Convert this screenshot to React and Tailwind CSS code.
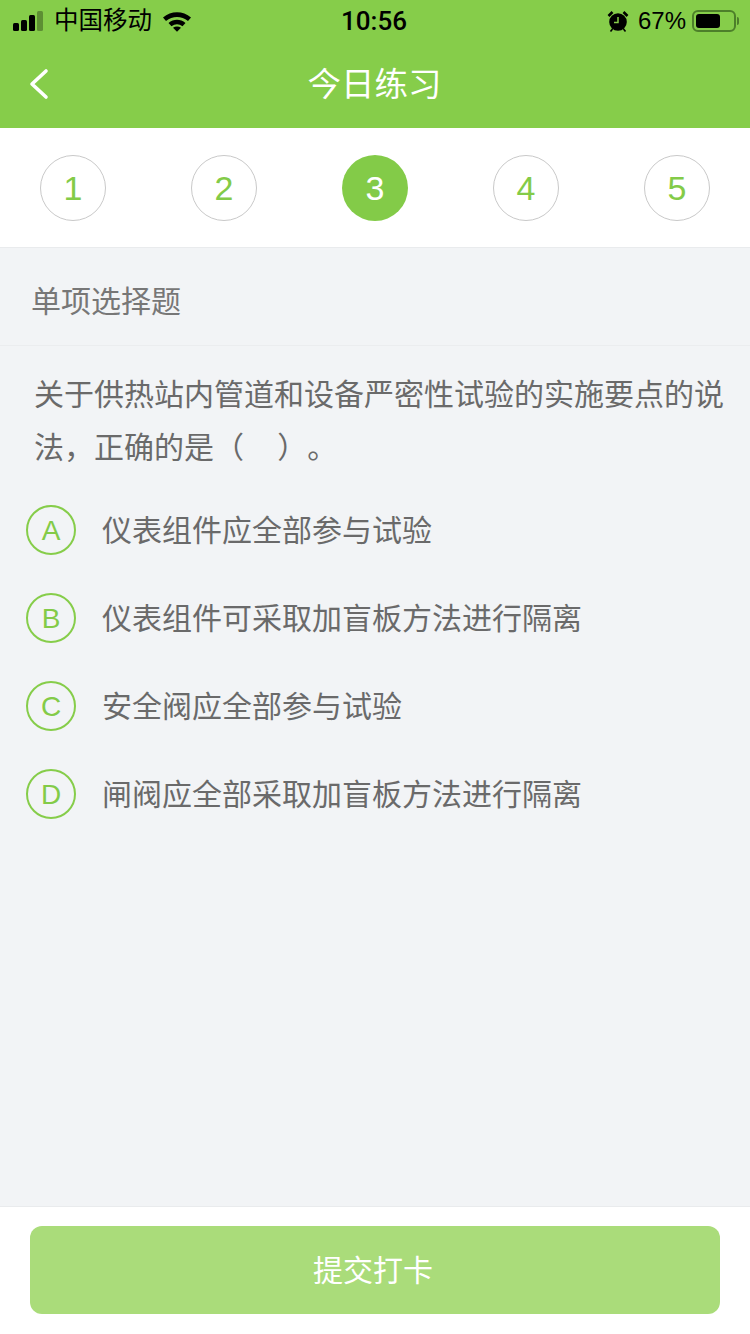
const STEPS = [1, 2, 3, 4, 5]
const OPTIONS = [
  { key: 'A', text: '仪表组件应全部参与试验' },
  { key: 'B', text: '仪表组件可采取加盲板方法进行隔离' },
  { key: 'C', text: '安全阀应全部参与试验' },
  { key: 'D', text: '闸阀应全部采取加盲板方法进行隔离' },
]
const FONT = "font-['Liberation_Sans','Noto_Sans_CJK_SC',sans-serif]"

function StatusBar() {
  return (
    <div className="h-10 flex items-center justify-between pl-[13px] pr-[11px] pt-[2px] text-black">
      <div className="flex-1 flex items-center">
        <div className="flex items-end gap-[2px] h-[20px]">
          <span className="w-[6px] h-[8px] rounded-[1.5px] bg-black" />
          <span className="w-[6px] h-[11px] rounded-[1.5px] bg-black" />
          <span className="w-[6px] h-[16px] rounded-[1.5px] bg-black" />
          <span className="w-[6px] h-[20px] rounded-[1.5px] bg-black/30" />
        </div>
        <span className="ml-[11px] text-[24.5px] leading-none">中国移动</span>
        <svg className="ml-[10px]" width="30" height="22" viewBox="0 0 30 22">
          <path d="M1 7.5 C9 0.5 21 0.5 29 7.5 L26 11 C19.5 5.5 10.5 5.5 4 11 Z" fill="#000" />
          <path d="M6.5 13 C11.5 8.8 18.5 8.8 23.5 13 L20.5 16.2 C17 13.5 13 13.5 9.5 16.2 Z" fill="#000" />
          <path d="M11 17.8 C13.5 16 16.5 16 19 17.8 L15 21.8 Z" fill="#000" />
        </svg>
      </div>
      <span className="mr-[4px] text-[26px] leading-none font-medium font-['Roboto',sans-serif]">10:56</span>
      <div className="flex-1 flex items-center justify-end">
        <svg width="22" height="22" viewBox="0 0 22 22">
          <circle cx="11" cy="12" r="8.8" fill="#000" />
          <path d="M11 7 V12.5 H7" stroke="#86cd4a" strokeWidth="1.5" fill="none" />
          <path d="M1.5 6 L5.5 2 M20.5 6 L16.5 2" stroke="#000" strokeWidth="2.6" />
          <path d="M5.5 19 L3.5 21.5 M16.5 19 L18.5 21.5" stroke="#000" strokeWidth="1.6" />
        </svg>
        <span className="ml-[9px] text-[24px] leading-none">67%</span>
        <div className="ml-[6px] w-[44px] h-[22px] rounded-[6px] border-2 border-[#4d7f2a] p-[2px]">
          <div className="w-[67%] h-full rounded-[3px] bg-black" />
        </div>
        <span className="ml-[1px] w-[2px] h-[8px] rounded-r bg-[#4d7f2a]" />
      </div>
    </div>
  )
}

export default function App() {
  return (
    <div className={`w-[750px] h-[1334px] flex flex-col overflow-hidden bg-[#f2f4f6] ${FONT}`}>
      <div className="bg-[#86cd4a] h-32 shrink-0">
        <StatusBar />
        <div className="h-[88px] flex items-center justify-center relative">
          <svg className="absolute left-[28px] top-[28px]" width="22" height="32" viewBox="0 0 22 32">
            <path d="M18 3 L4 16 L18 29" stroke="#fff" strokeWidth="3.6" strokeLinecap="round" strokeLinejoin="round" fill="none" />
          </svg>
          <h1 className="text-[33.5px] text-white pr-[1px] pt-[2px]">今日练习</h1>
        </div>
      </div>

      {/* Steps */}
      <div className="h-[120px] shrink-0 bg-white border-b border-[#e9ebed] flex justify-between pl-10 pr-10 pt-[27px]">
        {STEPS.map((n) => (
          <div
            key={n}
            className={`w-[66px] h-[66px] rounded-full flex items-center justify-center text-[34px] ${
              n === 3 ? 'bg-[#83cb48] text-white' : 'border border-[#c9c9c9] text-[#83cb48]'
            }`}
          >
            {n}
          </div>
        ))}
      </div>

      <div className="h-[98px] shrink-0 border-b border-[#ebedef] pl-[31px] pt-[10px] flex items-center text-[30px] text-[#777]">
        单项选择题
      </div>

      <div className="flex-1 min-h-0">
        <p className="pl-[34px] pr-[20px] pt-[22px] text-[30px] leading-[53px] text-[#6a6a6a] [text-spacing-trim:space-all]">
          关于供热站内管道和设备严密性试验的实施要点的说法，正确的是（ &nbsp; &nbsp;）。
        </p>
        <ul className="pl-[26px] pt-[12px]">
          {OPTIONS.map((o) => (
            <li key={o.key} className="h-[88px] flex items-center">
              <span className="w-[50px] h-[50px] shrink-0 rounded-full border-2 border-[#86cd4a] pt-[2px] flex items-center justify-center text-[28px] text-[#83cb48]">
                {o.key}
              </span>
              <span className="ml-[26px] text-[30px] text-[#6a6a6a]">{o.text}</span>
            </li>
          ))}
        </ul>
      </div>

      <div className="h-[128px] shrink-0 bg-white border-t border-[#e9ebed] px-[30px] pt-[19px]">
        <button type="button" className="w-full h-[88px] rounded-[12px] bg-[#aadc7a] text-white text-[30px] pr-[4px]">
          提交打卡
        </button>
      </div>
    </div>
  )
}
